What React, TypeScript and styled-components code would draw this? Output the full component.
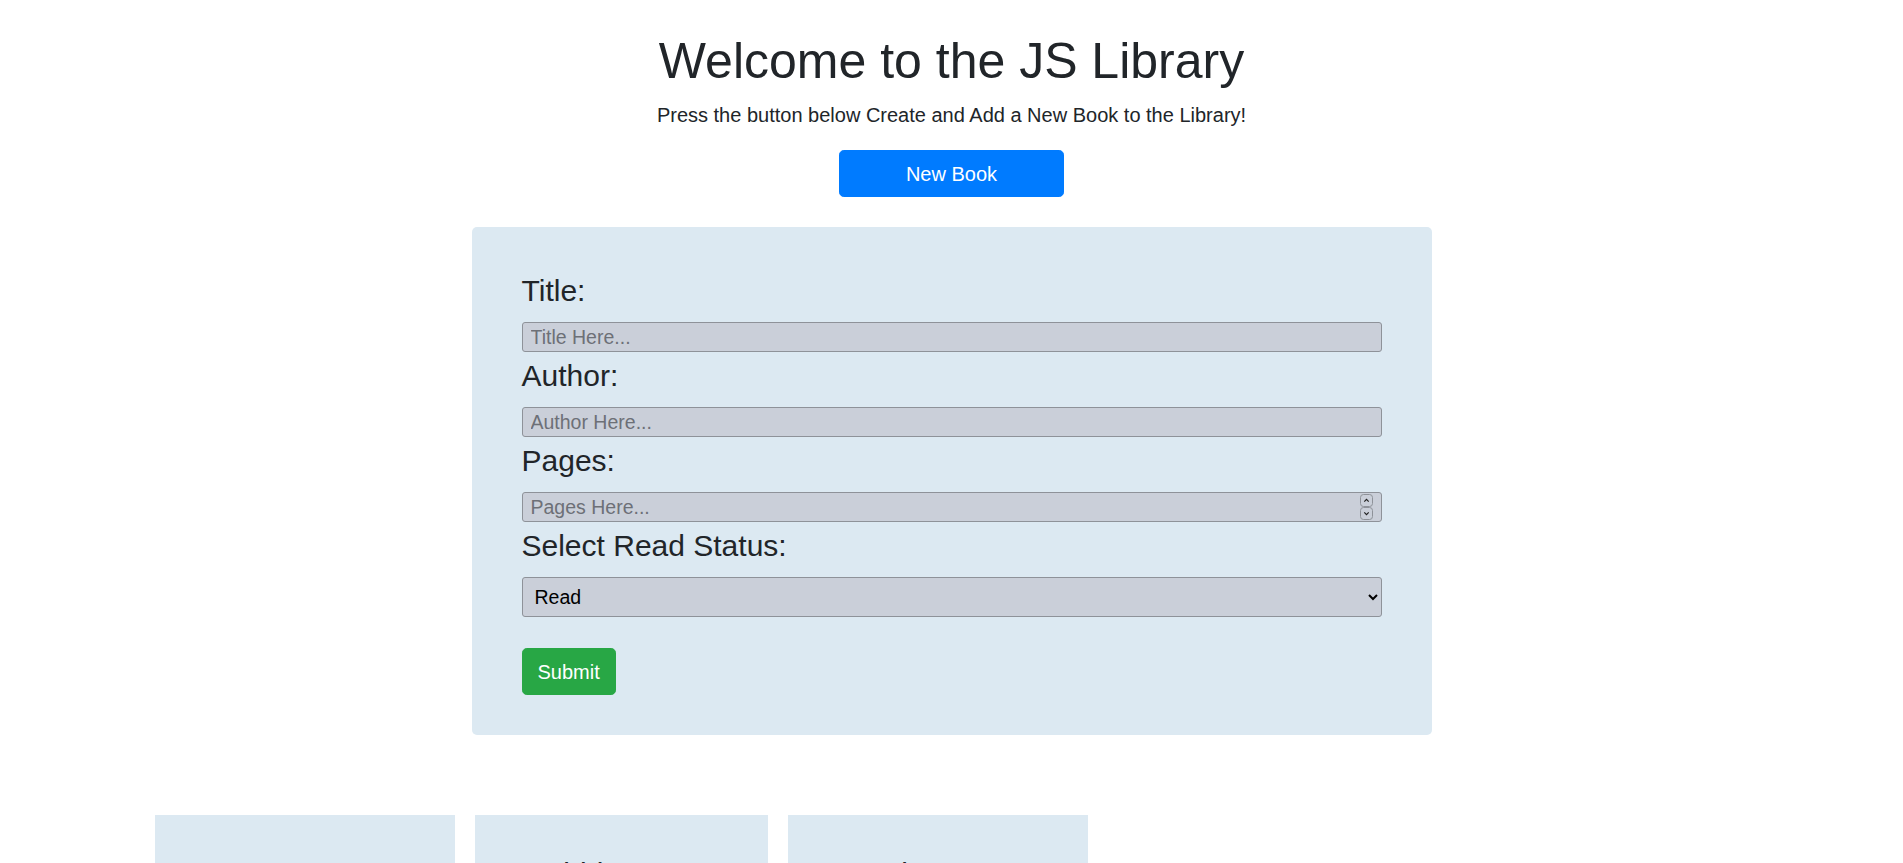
import React from "react";
import styled, { createGlobalStyle } from "styled-components";

const GlobalStyle = createGlobalStyle`
  html, body { margin: 0; padding: 0; background: #ffffff; }
  body {
    font-family: "Liberation Sans", Arial, sans-serif;
    color: #212529;
  }
  * { box-sizing: border-box; }
`;

const Page = styled.div`
  display: flex;
  flex-direction: column;
  align-items: center;
  min-height: 863px;
`;

const Header = styled.header`
  display: flex;
  flex-direction: column;
  align-items: center;
`;

const Title = styled.h1`
  margin: 31px 0 0;
  font-size: 50px;
  line-height: 60px;
  font-weight: 400;
  color: #212529;
`;

const Lead = styled.p`
  margin: 9px 0 0;
  font-size: 20px;
  line-height: 30px;
  color: #212529;
`;

const Button = styled.button<{ $variant: "primary" | "success"; $width?: number }>`
  font-family: "Liberation Sans", Arial, sans-serif;
  font-size: 20px;
  line-height: 30px;
  padding: 0 15px;
  height: 47px;
  width: ${(p) => (p.$width ? `${p.$width}px` : "auto")};
  border: 1px solid ${(p) => (p.$variant === "primary" ? "#007bff" : "#28a745")};
  background: ${(p) => (p.$variant === "primary" ? "#007bff" : "#28a745")};
  color: #ffffff;
  border-radius: 4.8px;
  cursor: pointer;
`;

const NewBookButton = styled(Button)`
  margin-top: 20px;
`;

const FormPanel = styled.form`
  width: 960px;
  margin-top: 30px;
  padding: 41px 50px 40px;
  background: #dce9f2;
  border-radius: 5px;
  display: flex;
  flex-direction: column;
`;

const Label = styled.label`
  display: block;
  font-size: 30px;
  line-height: 46px;
  margin-bottom: 8px;
  color: #212529;
`;

const fieldBase = `
  width: 100%;
  font-family: "Liberation Sans", Arial, sans-serif;
  background: #cacfd9;
  border: 1px solid #8e9299;
  border-radius: 3px;
  color: #000;
`;

const FieldWrap = styled.div`
  position: relative;
  margin-bottom: 1px;
`;

const TextInput = styled.input`
  ${fieldBase}
  display: block;
  height: 30px;
  font-size: 19.5px;
  padding: 0 8px;
  &::placeholder { color: #6d7077; }
  &::-webkit-inner-spin-button,
  &::-webkit-outer-spin-button {
    -webkit-appearance: none;
    margin: 0;
  }
  -moz-appearance: textfield;
`;

const Spinner = styled.div`
  position: absolute;
  top: 2px;
  right: 9px;
  width: 13px;
  height: 26px;
  display: flex;
  flex-direction: column;
  pointer-events: none;
`;

const Select = styled.select`
  ${fieldBase}
  height: 40px;
  font-size: 19.5px;
  padding: 0 8px;
`;

const SubmitButton = styled(Button)`
  align-self: flex-start;
  margin-top: 31px;
`;

const CardRow = styled.div`
  align-self: stretch;
  display: flex;
  gap: 20px;
  margin-top: 80px;
  padding-left: 155px;
`;

const Card = styled.div<{ $w: number }>`
  width: ${(p) => p.$w}px;
  height: 200px;
  background: #dce9f2;
  padding: 36px 50px;
`;

const CardTitle = styled.h3`
  margin: 0;
  font-size: 30px;
  line-height: 46px;
  font-weight: 400;
`;

function SpinIcon() {
  return (
    <Spinner>
      <svg width="13" height="26" viewBox="0 0 13 26" aria-hidden="true">
        <rect x="0.5" y="0.5" width="12" height="12" rx="3" fill="#cacfd9" stroke="#8e9299" />
        <rect x="0.5" y="13.5" width="12" height="12" rx="3" fill="#cacfd9" stroke="#8e9299" />
        <path d="M4.3 7.6 L6.5 5.4 L8.7 7.6" fill="none" stroke="#222" strokeWidth="1.2" />
        <path d="M4.3 18.4 L6.5 20.6 L8.7 18.4" fill="none" stroke="#222" strokeWidth="1.2" />
      </svg>
    </Spinner>
  );
}

export default function App() {
  return (
    <>
      <GlobalStyle />
      <Page>
        <Header>
          <Title>Welcome to the JS Library</Title>
          <Lead>Press the button below Create and Add a New Book to the Library!</Lead>
          <NewBookButton $variant="primary" $width={225} type="button">
            New Book
          </NewBookButton>
        </Header>
        <FormPanel onSubmit={(e) => e.preventDefault()}>
          <Label htmlFor="title">Title:</Label>
          <FieldWrap>
            <TextInput id="title" type="text" placeholder="Title Here..." />
          </FieldWrap>
          <Label htmlFor="author">Author:</Label>
          <FieldWrap>
            <TextInput id="author" type="text" placeholder="Author Here..." />
          </FieldWrap>
          <Label htmlFor="pages">Pages:</Label>
          <FieldWrap>
            <TextInput id="pages" type="number" placeholder="Pages Here..." />
            <SpinIcon />
          </FieldWrap>
          <Label htmlFor="status">Select Read Status:</Label>
          <Select id="status" defaultValue="Read">
            <option value="Read">Read</option>
            <option value="Not Read">Not Read</option>
          </Select>
          <SubmitButton $variant="success" type="submit">
            Submit
          </SubmitButton>
        </FormPanel>
        <CardRow>
          <Card $w={300}>
            <CardTitle>Harry Potter</CardTitle>
          </Card>
          <Card $w={293}>
            <CardTitle>Hobbit</CardTitle>
          </Card>
          <Card $w={300}>
            <CardTitle>Hamlet</CardTitle>
          </Card>
        </CardRow>
      </Page>
    </>
  );
}
